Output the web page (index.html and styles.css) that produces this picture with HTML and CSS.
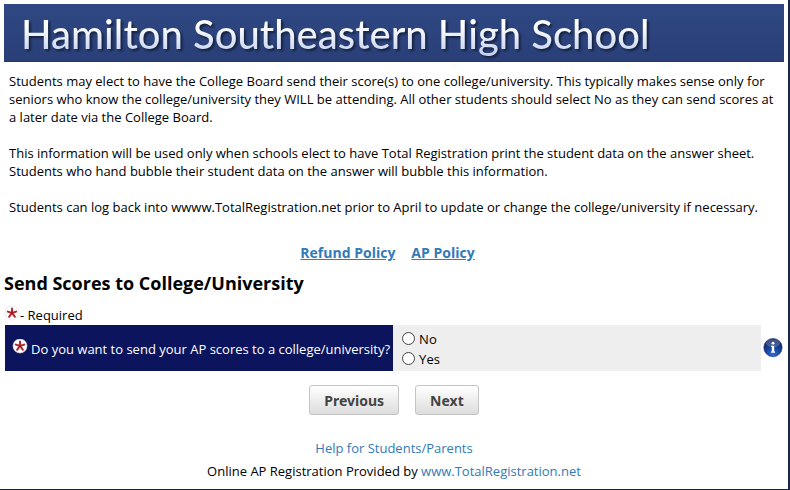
FILE: index.html
```
<!DOCTYPE html>
<html lang="en">
<head>
  <meta charset="UTF-8">
  <meta name="viewport" content="width=device-width, initial-scale=1.0">
  <title>Send Scores to College/University</title>
  <link rel="stylesheet" href="styles.css">
</head>
<body>
  <!-- Asterisk shared by the required markers -->
  <svg class="symbols" aria-hidden="true">
    <symbol id="required" viewBox="0 0 16 16">
      <circle cx="8" cy="7" r="7" fill="#fff" stroke="#e4dede" stroke-width="0.6"/>
      <g stroke="#b3252b" stroke-width="2" stroke-linecap="round">
        <path d="M8 5.4V2.6"/>
        <path d="M9.4 6.5L12.2 5.6"/>
        <path d="M9 8.2L10.9 10.8"/>
        <path d="M7 8.2L5.1 10.8"/>
        <path d="M6.6 6.5L3.8 5.6"/>
      </g>
      <circle cx="8" cy="7" r="1.2" fill="#8d1a1f"/>
    </symbol>
  </svg>

  <div class="page">
    <header class="banner"><span>Hamilton Southeastern High School</span></header>

    <div class="intro">
      <p>Students may elect to have the College Board send their score(s) to one college/university. This typically makes sense only for seniors who know the college/university they WILL be attending. All other students should select No as they can send scores at a later date via the College Board.</p>
      <p>This information will be used only when schools elect to have Total Registration print the student data on the answer sheet. Students who hand bubble their student data on the answer will bubble this information.</p>
      <p>Students can log back into wwww.TotalRegistration.net prior to April to update or change the college/university if necessary.</p>
    </div>

    <nav class="policies">
      <a href="#refund">Refund Policy</a>
      <a href="#ap">AP Policy</a>
    </nav>

    <h1>Send Scores to College/University</h1>
    <div class="legend">
      <svg class="star"><use href="#required"/></svg>
      <span>- Required</span>
    </div>

    <form>
      <div class="question-row">
        <div class="question" id="question">
          <svg class="star"><use href="#required"/></svg>
          <span>Do you want to send your AP scores to a college/university?</span>
        </div>
        <div class="answers" role="radiogroup" aria-labelledby="question">
          <label><input type="radio" name="send" value="no">No</label>
          <label><input type="radio" name="send" value="yes">Yes</label>
        </div>
        <a class="info" href="#info" aria-label="More information">
          <svg viewBox="0 0 20 20">
            <defs>
              <radialGradient id="ball" cx="0.5" cy="0.9" r="0.8">
                <stop offset="0" stop-color="#2f6fd0"/>
                <stop offset="0.5" stop-color="#17459f"/>
                <stop offset="1" stop-color="#14245f"/>
              </radialGradient>
            </defs>
            <circle cx="10" cy="9.6" r="9.2" fill="url(#ball)" stroke="#1c3478" stroke-width="0.6"/>
            <ellipse cx="10" cy="5.2" rx="7" ry="4" fill="#fff" opacity="0.2"/>
            <circle cx="10" cy="5.2" r="1.4" fill="#fff"/>
            <path d="M8.2 7.8h3v5.8h.9v1.1H7.9v-1.1h.9V8.9h-.6z" fill="#fff"/>
          </svg>
        </a>
      </div>

      <div class="buttons">
        <button type="button">Previous</button>
        <button type="submit">Next</button>
      </div>
    </form>

    <footer>
      <a href="#help">Help for Students/Parents</a>
      <div>Online AP Registration Provided by <a href="#home">www.TotalRegistration.net</a></div>
    </footer>
  </div>
</body>
</html>
```
FILE: styles.css
```
* {
  box-sizing: border-box;
}

body {
  margin: 0;
  background: #fff;
  color: #000;
  font: 13px/18px "Open Sans", "Noto Sans", sans-serif;
}

a {
  color: #337ab7;
  text-decoration: none;
}

.symbols {
  position: absolute;
  width: 0;
  height: 0;
}

.page {
  min-height: 100vh;
  padding: 4px;
  border-right: 2px solid #1b2548;
  border-bottom: 1px solid #1b2548;
}

.banner {
  height: 58px;
  padding-left: 17px;
  background: linear-gradient(#2f4883, #2a3f78);
  border-bottom: 1px solid #26346f;
  font-family: Lato, "Open Sans", sans-serif;
  font-size: 40px;
  font-weight: 500;
  line-height: 60px;
  white-space: nowrap;
}

.banner span {
  display: inline-block;
  background: linear-gradient(#fff 35%, #c3d0ee 85%);
  background-clip: text;
  -webkit-background-clip: text;
  color: transparent;
  filter: drop-shadow(2px 2px 1px #14213f);
}

.intro {
  padding: 10px 5px 0;
}

.intro p {
  margin: 0 0 18px;
}

.policies {
  display: flex;
  justify-content: center;
  gap: 16px;
  padding: 10px 13px 9px 0;
  font-size: 14px;
  font-weight: bold;
}

.policies a {
  text-decoration: underline;
}

h1 {
  margin: 0;
  font-size: 18px;
  line-height: 24px;
}

.star {
  flex: none;
  width: 16px;
  height: 16px;
}

.legend {
  display: flex;
  padding-top: 11px;
}

.question-row {
  display: flex;
  height: 46px;
  margin-top: 1px;
  padding-left: 1px;
}

.question {
  display: flex;
  align-items: center;
  gap: 3px;
  flex: none;
  padding: 2px 3px 0 7px;
  background: #0b145c;
  color: #fff;
}

.question .star {
  margin-bottom: 4px;
}

.answers {
  flex: 1;
  padding: 4px 9px 2px;
  background: #eee;
}

.answers label {
  display: flex;
  align-items: center;
  gap: 4px;
  height: 20px;
}

.answers input {
  appearance: none;
  width: 13px;
  height: 13px;
  margin: 0 0 2px;
  border: 1px solid #444;
  border-radius: 50%;
  background: #fff;
}

.answers input:checked {
  background: radial-gradient(#222 40%, #fff 45%);
}

.info {
  display: flex;
  align-items: center;
  padding: 0 1px 0 2px;
}

.info svg {
  width: 20px;
  height: 20px;
}

.buttons {
  display: flex;
  justify-content: center;
  gap: 16px;
  padding: 14px 0 24px;
}

button {
  height: 30px;
  padding: 0 14px;
  border: 1px solid #c4c4c4;
  border-radius: 3px;
  background: linear-gradient(#fff, #ddd);
  color: #444;
  font: bold 14px "Noto Sans", sans-serif;
}

footer {
  display: flex;
  flex-direction: column;
  align-items: center;
  gap: 5px;
}
```
